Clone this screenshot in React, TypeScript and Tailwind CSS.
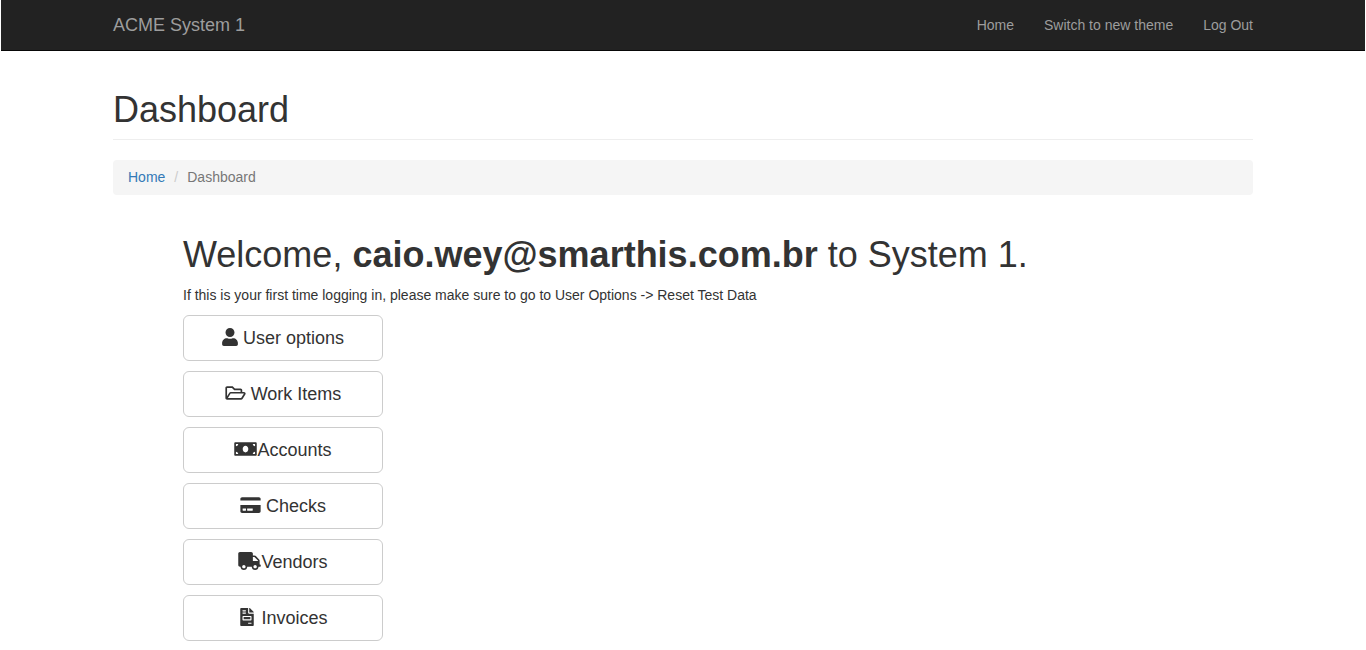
import type { IconType } from "react-icons";
import {
  FaCreditCard,
  FaFileInvoice,
  FaMoneyBill,
  FaRegFolderOpen,
  FaTruck,
  FaUser,
} from "react-icons/fa";

type MenuItem = {
  label: string;
  Icon: IconType;
  iconClass: string;
  spaced: boolean;
};

const menu: MenuItem[] = [
  { label: "User options", Icon: FaUser, iconClass: "w-4", spaced: true },
  { label: "Work Items", Icon: FaRegFolderOpen, iconClass: "w-[21px]", spaced: true },
  { label: "Accounts", Icon: FaMoneyBill, iconClass: "w-[23px]", spaced: false },
  { label: "Checks", Icon: FaCreditCard, iconClass: "w-[21px]", spaced: true },
  { label: "Vendors", Icon: FaTruck, iconClass: "w-[23px]", spaced: false },
  { label: "Invoices", Icon: FaFileInvoice, iconClass: "w-[18px]", spaced: true },
];

const navLinks = ["Home", "Switch to new theme", "Log Out"];

function Navbar() {
  return (
    <header className="mx-px border-b border-[#080808] bg-[#222]">
      <nav className="mx-auto flex max-w-[1170px] items-center justify-between px-[15px]">
        <a href="#" className="py-[15px] text-lg leading-5 text-[#9d9d9d]">
          ACME System 1
        </a>
        <ul className="flex gap-[30px]">
          {navLinks.map((link) => (
            <li key={link}>
              <a href="#" className="block py-[15px] text-[#9d9d9d]">
                {link}
              </a>
            </li>
          ))}
        </ul>
      </nav>
    </header>
  );
}

function MenuButton({ label, Icon, iconClass, spaced }: MenuItem) {
  return (
    <a
      href="#"
      className={`flex items-center justify-center rounded-md border border-[#ccc] bg-white py-[10px] text-lg leading-6 hover:bg-[#e6e6e6] ${
        spaced ? "gap-[5px]" : ""
      }`}
    >
      <Icon aria-hidden="true" className={`mb-0.5 h-[18px] shrink-0 ${iconClass}`} />
      <span>{label}</span>
    </a>
  );
}

export default function App() {
  return (
    <div className="bg-white font-['Liberation_Sans',Arial,sans-serif] text-sm leading-5 text-[#333]">
      <Navbar />
      <main className="mx-auto max-w-[1170px] px-[15px] pt-[39px]">
        <h1 className="border-b border-[#eee] pb-[9px] text-4xl leading-10 font-medium">
          Dashboard
        </h1>
        <nav aria-label="Breadcrumb" className="mt-5 rounded bg-[#f5f5f5] px-[15px] pt-[7px] pb-2">
          <ol className="flex">
            <li>
              <a href="#" className="text-[#337ab7]">
                Home
              </a>
            </li>
            <li aria-hidden="true" className="px-[9px] text-[#ccc]">
              /
            </li>
            <li aria-current="page" className="text-[#777]">
              Dashboard
            </li>
          </ol>
        </nav>
        <section className="mt-10 px-[70px]">
          <h2 className="text-4xl leading-10 font-medium">
            Welcome, <strong className="font-bold">caio.wey@smarthis.com.br</strong> to System 1.
          </h2>
          <p className="mt-[10px]">
            If this is your first time logging in, please make sure to go to User Options -&gt; Reset
            Test Data
          </p>
          <div className="mt-[10px] flex w-[200px] flex-col gap-[10px]">
            {menu.map((item) => (
              <MenuButton key={item.label} {...item} />
            ))}
          </div>
        </section>
      </main>
    </div>
  );
}
